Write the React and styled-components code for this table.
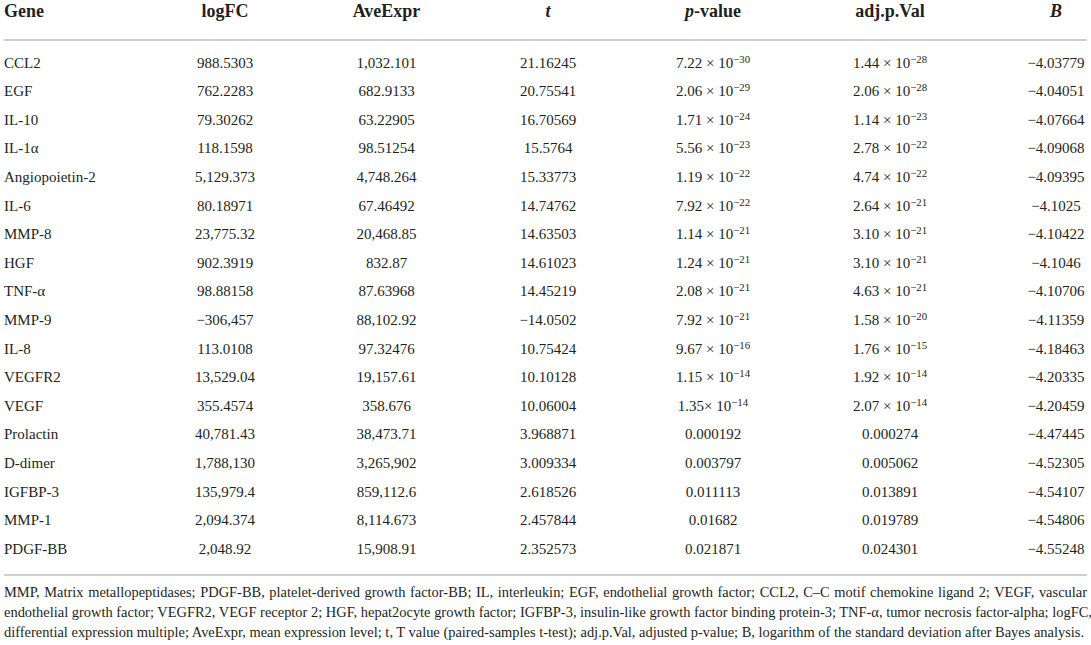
import React from "react";
import styled, { createGlobalStyle } from "styled-components";

const Global = createGlobalStyle`
  html, body { margin: 0; padding: 0; background: #fff; }
  body { font-family: "Liberation Serif", "Times New Roman", serif; color: #231f20; }
`;

const Page = styled.div`
  width: 1091px;
  box-sizing: border-box;
  padding: 0 4px;
`;

const Table = styled.div`
  display: flex;
  flex-direction: column;
`;

const cols = "141px 160px 163px 160px 170px 184px 1fr";

const HeadRow = styled.div`
  display: grid;
  grid-template-columns: ${cols};
  font-size: 18px;
  font-weight: bold;
  line-height: 22px;
  padding-bottom: 17px;
  border-bottom: 2px solid #cfcfcf;
`;

const Body = styled.div`
  display: flex;
  flex-direction: column;
  padding: 7.6px 0 10.6px;
  border-bottom: 2px solid #cfcfcf;
`;

const Row = styled.div`
  display: grid;
  grid-template-columns: ${cols};
  font-size: 15px;
  line-height: 28.6px;
  height: 28.6px;
`;

const Cell = styled.div`
  text-align: ${(p) => (p.$first ? "left" : "center")};
  padding-left: ${(p) => (p.$last ? "43px" : "0")};
  white-space: nowrap;
`;

const Ital = styled.i`
  font-style: italic;
`;

const Sup = styled.sup`
  font-size: 0.72em;
  line-height: 0;
  vertical-align: 0.45em;
`;

const Foot = styled.div`
  margin-top: 6.3px;
  font-size: 14.45px;
  line-height: 20px;
`;

const FootLine = styled.div`
  text-align: ${(p) => (p.$justify ? "justify" : "left")};
  text-align-last: ${(p) => (p.$justify ? "justify" : "left")};
  white-space: nowrap;
`;

const Sci = ({ v }) => {
  if (!v.includes("|")) return <>{v}</>;
  const [m, e] = v.split("|");
  return (
    <>
      {m}10<Sup>{e}</Sup>
    </>
  );
};

const rows = [
  ["CCL2", "988.5303", "1,032.101", "21.16245", "7.22 × |−30", "1.44 × |−28", "−4.03779"],
  ["EGF", "762.2283", "682.9133", "20.75541", "2.06 × |−29", "2.06 × |−28", "−4.04051"],
  ["IL-10", "79.30262", "63.22905", "16.70569", "1.71 × |−24", "1.14 × |−23", "−4.07664"],
  ["IL-1α", "118.1598", "98.51254", "15.5764", "5.56 × |−23", "2.78 × |−22", "−4.09068"],
  ["Angiopoietin-2", "5,129.373", "4,748.264", "15.33773", "1.19 × |−22", "4.74 × |−22", "−4.09395"],
  ["IL-6", "80.18971", "67.46492", "14.74762", "7.92 × |−22", "2.64 × |−21", "−4.1025"],
  ["MMP-8", "23,775.32", "20,468.85", "14.63503", "1.14 × |−21", "3.10 × |−21", "−4.10422"],
  ["HGF", "902.3919", "832.87", "14.61023", "1.24 × |−21", "3.10 × |−21", "−4.1046"],
  ["TNF-α", "98.88158", "87.63968", "14.45219", "2.08 × |−21", "4.63 × |−21", "−4.10706"],
  ["MMP-9", "−306,457", "88,102.92", "−14.0502", "7.92 × |−21", "1.58 × |−20", "−4.11359"],
  ["IL-8", "113.0108", "97.32476", "10.75424", "9.67 × |−16", "1.76 × |−15", "−4.18463"],
  ["VEGFR2", "13,529.04", "19,157.61", "10.10128", "1.15 × |−14", "1.92 × |−14", "−4.20335"],
  ["VEGF", "355.4574", "358.676", "10.06004", "1.35× |−14", "2.07 × |−14", "−4.20459"],
  ["Prolactin", "40,781.43", "38,473.71", "3.968871", "0.000192", "0.000274", "−4.47445"],
  ["D-dimer", "1,788,130", "3,265,902", "3.009334", "0.003797", "0.005062", "−4.52305"],
  ["IGFBP-3", "135,979.4", "859,112.6", "2.618526", "0.011113", "0.013891", "−4.54107"],
  ["MMP-1", "2,094.374", "8,114.673", "2.457844", "0.01682", "0.019789", "−4.54806"],
  ["PDGF-BB", "2,048.92", "15,908.91", "2.352573", "0.021871", "0.024301", "−4.55248"],
];

export default function App() {
  return (
    <Page>
      <Global />
      <Table>
        <HeadRow>
          <Cell $first>Gene</Cell>
          <Cell>logFC</Cell>
          <Cell>AveExpr</Cell>
          <Cell>
            <Ital>t</Ital>
          </Cell>
          <Cell>
            <Ital>p</Ital>-value
          </Cell>
          <Cell>adj.p.Val</Cell>
          <Cell $last>
            <Ital>B</Ital>
          </Cell>
        </HeadRow>
        <Body>
          {rows.map((r) => (
            <Row key={r[0]}>
              {r.map((c, i) => (
                <Cell key={i} $first={i === 0} $last={i === 6}>
                  <Sci v={c} />
                </Cell>
              ))}
            </Row>
          ))}
        </Body>
      </Table>
      <Foot>
        <FootLine $justify>
          MMP, Matrix metallopeptidases; PDGF-BB, platelet-derived growth factor-BB; IL, interleukin; EGF, endothelial growth factor; CCL2, C–C motif chemokine ligand 2; VEGF, vascular
        </FootLine>
        <FootLine $justify>
          endothelial growth factor; VEGFR2, VEGF receptor 2; HGF, hepat2ocyte growth factor; IGFBP-3, insulin-like growth factor binding protein-3; TNF-α, tumor necrosis factor-alpha; logFC,
        </FootLine>
        <FootLine>
          differential expression multiple; AveExpr, mean expression level; t, T value (paired-samples t-test); adj.p.Val, adjusted p-value; B, logarithm of the standard deviation after Bayes analysis.
        </FootLine>
      </Foot>
    </Page>
  );
}
